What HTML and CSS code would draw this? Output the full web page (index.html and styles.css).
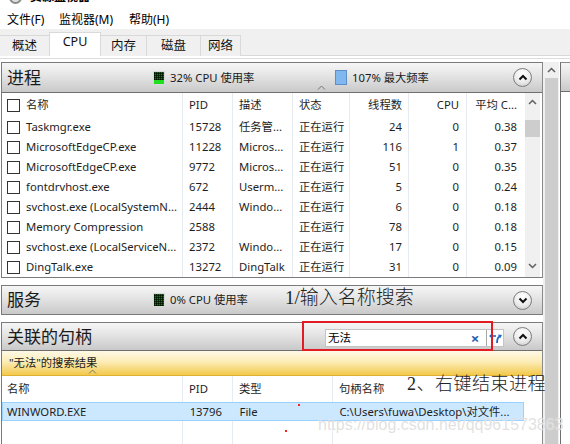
FILE: index.html
```html
<!DOCTYPE html>
<html lang="zh-CN">
<head>
<meta charset="utf-8">
<title>任务管理器</title>
<link rel="stylesheet" href="styles.css">
</head>
<body>
<div class="win">
  <div class="titlebar"><div class="titleinner"><span class="appicon"></span><span class="apptitle">资源监视器</span></div></div>
  <div class="menu"><span class="m1">文件(F)</span><span class="m2">监视器(M)</span><span class="m3">帮助(H)</span></div>
  <div class="tabs">
    <div class="tab w1">概述</div>
    <div class="tab sel w2">CPU</div>
    <div class="tab w3">内存</div>
    <div class="tab w4">磁盘</div>
    <div class="tab w5">网络</div>
  </div>
  <div class="pageline"></div>

  <div class="content">
    <div class="panels">
      <section class="panel proc">
        <header class="phead">
          <span class="ptitle">进程</span>
          <span class="stat s1"><i class="cpuicon p32"></i>32% CPU 使用率</span>
          <span class="stat s2"><i class="freqicon"></i>107% 最大频率</span>
          <span class="circle"><svg width="10" height="7" viewBox="0 0 10 7"><path d="M1.5 5.5 L5 2 L8.5 5.5" fill="none" stroke="#111" stroke-width="2"/></svg></span>
        </header>
        <div class="pbody">
          <div class="grid">
            <div class="row hdr">
              <div class="c name"><i class="cb"></i>名称</div>
              <div class="c pid">PID</div>
              <div class="c desc">描述</div>
              <div class="c st">状态<span class="sortup"><svg width="9" height="5" viewBox="0 0 9 5"><path d="M1 4.5 L4.5 1 L8 4.5" fill="none" stroke="#777" stroke-width="1"/></svg></span></div>
              <div class="c num th">线程数</div>
              <div class="c num cpu">CPU</div>
              <div class="c num avg">平均 C...</div>
            </div>
            <div class="row"><div class="c name"><i class="cb"></i>Taskmgr.exe</div><div class="c pid">15728</div><div class="c desc">任务管...</div><div class="c st">正在运行</div><div class="c num th">24</div><div class="c num cpu">0</div><div class="c num avg">0.38</div></div>
            <div class="row"><div class="c name"><i class="cb"></i>MicrosoftEdgeCP.exe</div><div class="c pid">11228</div><div class="c desc">Micros...</div><div class="c st">正在运行</div><div class="c num th">116</div><div class="c num cpu">1</div><div class="c num avg">0.37</div></div>
            <div class="row"><div class="c name"><i class="cb"></i>MicrosoftEdgeCP.exe</div><div class="c pid">9772</div><div class="c desc">Micros...</div><div class="c st">正在运行</div><div class="c num th">51</div><div class="c num cpu">0</div><div class="c num avg">0.35</div></div>
            <div class="row"><div class="c name"><i class="cb"></i>fontdrvhost.exe</div><div class="c pid">672</div><div class="c desc">Userm...</div><div class="c st">正在运行</div><div class="c num th">5</div><div class="c num cpu">0</div><div class="c num avg">0.24</div></div>
            <div class="row"><div class="c name"><i class="cb"></i>svchost.exe (LocalSystemN...</div><div class="c pid">2444</div><div class="c desc">Windo...</div><div class="c st">正在运行</div><div class="c num th">6</div><div class="c num cpu">0</div><div class="c num avg">0.18</div></div>
            <div class="row"><div class="c name"><i class="cb"></i>Memory Compression</div><div class="c pid">2588</div><div class="c desc"></div><div class="c st">正在运行</div><div class="c num th">78</div><div class="c num cpu">0</div><div class="c num avg">0.18</div></div>
            <div class="row"><div class="c name"><i class="cb"></i>svchost.exe (LocalServiceN...</div><div class="c pid">2372</div><div class="c desc">Windo...</div><div class="c st">正在运行</div><div class="c num th">17</div><div class="c num cpu">0</div><div class="c num avg">0.15</div></div>
            <div class="row"><div class="c name"><i class="cb"></i>DingTalk.exe</div><div class="c pid">13272</div><div class="c desc">DingTalk</div><div class="c st">正在运行</div><div class="c num th">31</div><div class="c num cpu">0</div><div class="c num avg">0.09</div></div>
          </div>
          <div class="iscroll">
            <span class="arr"><svg width="9" height="6" viewBox="0 0 9 6"><path d="M1 5 L4.5 1.5 L8 5" fill="none" stroke="#606060" stroke-width="1.5"/></svg></span>
            <span class="ithumb"></span>
            <span class="arr bottom"><svg width="9" height="6" viewBox="0 0 9 6"><path d="M1 1 L4.5 4.5 L8 1" fill="none" stroke="#606060" stroke-width="1.5"/></svg></span>
          </div>
        </div>
      </section>

      <section class="panel svc">
        <header class="phead">
          <span class="ptitle">服务</span>
          <span class="stat s1"><i class="cpuicon p0"></i>0% CPU 使用率</span>
          <span class="spacer"></span>
          <span class="circle"><svg width="10" height="7" viewBox="0 0 10 7"><path d="M1.5 1.5 L5 5 L8.5 1.5" fill="none" stroke="#111" stroke-width="2"/></svg></span>
        </header>
      </section>

      <section class="panel hnd">
        <header class="phead">
          <span class="ptitle">关联的句柄</span>
          <span class="spacer"></span>
          <span class="search">
            <span class="sval">无法</span>
            <span class="sclear">×</span>
            <span class="sgo"><svg width="15" height="12" viewBox="0 0 15 12"><path d="M1 4 L4 1.5 L4 6.5 Z" fill="#1f66c4"/><path d="M4 4 H8" stroke="#1f66c4" stroke-width="1.6" fill="none"/><path d="M9 11 C9 7 10 5 12 4" stroke="#1f66c4" stroke-width="1.8" fill="none"/><path d="M10 2.5 L14 3 L12 6.5 Z" fill="#1f66c4"/></svg></span>
          </span>
          <span class="circle"><svg width="10" height="7" viewBox="0 0 10 7"><path d="M1.5 5.5 L5 2 L8.5 5.5" fill="none" stroke="#111" stroke-width="2"/></svg></span>
        </header>
        <div class="result">"无法"的搜索结果</div>
        <div class="htable">
          <div class="hrow hhdr">
            <div class="c hname">名称<span class="sortup2"><svg width="9" height="5" viewBox="0 0 9 5"><path d="M1 4.5 L4.5 1 L8 4.5" fill="none" stroke="#777" stroke-width="1"/></svg></span></div>
            <div class="c pid">PID</div>
            <div class="c htype">类型</div>
            <div class="c hpath">句柄名称</div>
          </div>
          <div class="hrow selrow">
            <div class="c hname">WINWORD.EXE</div>
            <div class="c pid">13796</div>
            <div class="c htype">File</div>
            <div class="c hpath">C:\Users\fuwa\Desktop\对文件...</div>
          </div>
          <div class="hrow empty"><div class="c hname"></div><div class="c pid"></div><div class="c htype"></div><div class="c hpath"></div></div>
          <div class="hrow empty"><div class="c hname"></div><div class="c pid"></div><div class="c htype"></div><div class="c hpath"></div></div>
        </div>
      </section>
    </div>

    <div class="oscroll">
      <span class="arr"><svg width="9" height="6" viewBox="0 0 9 6"><path d="M1 5 L4.5 1.5 L8 5" fill="none" stroke="#606060" stroke-width="1.5"/></svg></span>
      <span class="othumb"></span>
    </div>
    <div class="edge"><div class="edgehead"></div></div>
  </div>

  <div class="note n1">1/输入名称搜索</div>
  <div class="note n2">2、右键结束进程</div>
  <div class="redbox"></div>
  <div class="dot d1"></div>
  <div class="dot d2"></div>
  <div class="watermark">https://blog.csdn.net/qq961573863</div>
</div>
</body>
</html>
```

FILE: styles.css
```css
* { box-sizing: border-box; }
html, body { margin: 0; padding: 0; background: #fff; }
body {
  width: 570px; height: 444px; overflow: hidden;
  font-family: "Noto Sans", "Noto Sans CJK SC", sans-serif;
  font-size: 12px; color: #1a1a1a;
}
.win { position: relative; width: 570px; height: 444px; overflow: hidden; }

/* title bar (cropped) */
.titlebar { height: 6px; overflow: hidden; position: relative; }
.titleinner { display: flex; align-items: center; gap: 8px; margin-top: -11px; padding-left: 9px; height: 16px; }
.appicon { width: 13px; height: 13px; border-radius: 50%; border: 2px solid #8a8a8a; background: #e0e0e0; }
.apptitle { font-weight: 700; font-size: 12px; line-height: 16px; color: #000; }

/* menu */
.menu { height: 23px; padding-top: 5px; padding-left: 7px; display: flex; line-height: 18px; font-size: 12px; color: #000; }
.menu .m1 { width: 52px; }
.menu .m2 { width: 70px; }

/* tabs */
.tabs { height: 27px; background: #f0f0f0; border-bottom: 1px solid #d9d9d9; display: flex; align-items: flex-end; }
.tab { height: 21px; margin-bottom: -1px; border: 1px solid #d9d9d9; border-bottom: none; margin-left: -1px; line-height: 19px; font-size: 12.5px; color: #111; background: #f0f0f0; text-align: center; }
.tab.w1 { width: 50px; margin-left: 0; border-left: none; }
.tab.w2 { width: 52px; }
.tab.w3 { width: 47px; }
.tab.w4 { width: 55px; }
.tab.w5 { width: 41px; }
.tab.sel { height: 24px; background: #fff; position: relative; z-index: 1; line-height: 17px; }

.pageline { height: 3px; border-bottom: 1px solid #dcdcdc; }

/* content */
.content { display: flex; height: 382px; margin-top: 3px; }
.panels { width: 543px; padding-left: 1px; display: flex; flex-direction: column; gap: 7px; }
.panel { border: 1px solid #7a7a7a; border-right-color: #8a8a8a; width: 542px; background: #fff; }
.phead {
  height: 30px; border-bottom: 1px solid #6e6e6e;
  background: linear-gradient(#f6f6f6, #e6e6e6 40%, #c9c9c9);
  display: flex; align-items: center; padding-left: 5px; padding-right: 10px;
}
.svc .phead { border-bottom: none; height: 28px; }
.ptitle { font-size: 17px; line-height: 22px; width: 146px; color: #1a1a1a; }
.hnd .ptitle { width: auto; }
.stat { display: flex; align-items: center; font-size: 11.3px; line-height: 16px; }
.stat.s1 { width: 182px; }
.stat.s2 { flex: 1; }
.spacer { flex: 1; }
.cpuicon { width: 12px; height: 14px; margin-right: 5px; border: 1px solid #d8d8d8; display: inline-block;
  background-color: #0f7d0f;
  background-image:
    repeating-linear-gradient(90deg, rgba(0,0,0,.6) 0 1px, transparent 1px 2px),
    repeating-linear-gradient(0deg, rgba(0,0,0,.6) 0 1px, transparent 1px 2px);
}
.cpuicon.p32 { background-image:
    linear-gradient(to top, #1fe01f 0 4px, transparent 4px),
    repeating-linear-gradient(90deg, rgba(0,0,0,.6) 0 1px, transparent 1px 2px),
    repeating-linear-gradient(0deg, rgba(0,0,0,.6) 0 1px, transparent 1px 2px); }
.freqicon { width: 12px; height: 15px; margin-right: 5px; display: inline-block; background: #7fb7ee; border: 1px solid #5d8fc6; }
.circle {
  width: 19px; height: 19px; border-radius: 50%; border: 1px solid #7c7c7c;
  background: radial-gradient(circle at 50% 30%, #ffffff, #ececec 55%, #c4c4c4);
  display: flex; align-items: center; justify-content: center; flex: none;
}

/* process table */
.pbody { display: flex; height: 184px; }
.grid { width: 523px; }
.row { display: flex; height: 20px; line-height: 20px; }
.row.hdr { height: 24px; line-height: 24px; }
.c { white-space: nowrap; overflow: hidden; border-left: 1px solid #e6ebf2; padding: 0 6px; color: #1e1e1e; position: relative; font-size: 11.3px; }
.c.name { width: 180px; border-left: none; padding-left: 5px; display: flex; align-items: center; }
.c.pid { width: 50px; }
.c.desc { width: 60px; }
.c.st { width: 57px; overflow: visible; }
.c.th { width: 59px; }
.c.cpu { width: 58px; padding-right: 7px; }
.c.avg { width: 59px; padding-right: 8px; }
.c.num { text-align: right; }
.cb { width: 13px; height: 13px; border: 1px solid #333; display: inline-block; margin-right: 6px; flex: none; background: #fff; }
.sortup { position: absolute; left: 24px; top: -8px; line-height: 0; }
.iscroll { width: 15px; background: #f0f0f0; display: flex; flex-direction: column; align-items: center; }
.iscroll .arr { height: 17px; display: flex; align-items: center; justify-content: center; line-height: 0; }
.iscroll .ithumb { width: 15px; height: 17px; background: #cdcdcd; margin-top: 10px; }
.iscroll .arr.bottom { margin-top: auto; margin-bottom: 3px; }

/* handles */
.hnd .phead { height: 28px; }
.search {
  display: flex; align-items: center; height: 18px; width: 179px;
  border: 1px solid #c4c4c4; background: #fff; margin-right: 9px; margin-top: 2px;
}
.sval { flex: 1; padding-left: 2px; font-size: 11.5px; line-height: 16px; color: #000; }
.sclear { width: 12px; color: #2a5fb0; font-size: 15px; line-height: 16px; font-weight: 700; text-align: center; margin-right: 5px; }
.sgo { width: 17px; height: 16px; border-left: 1px solid #a8a8a8; display: flex; align-items: center; justify-content: center; }
.result {
  height: 25px; line-height: 24px; padding-left: 7px; font-size: 11.3px; color: #1a1a1a;
  background: linear-gradient(#fff9e6, #fcecb6 45%, #f3c94c);
  border-bottom: 1px solid #e0b030;
}
.hrow { display: flex; height: 20px; line-height: 18px; }
.hhdr { height: 26px; line-height: 26px; }
.c.hname { width: 180px; border-left: none; padding-left: 5px; overflow: visible; }
.c.htype { width: 100px; }
.c.hpath { width: 191px; }
.sortup2 { position: absolute; left: 86px; top: -7px; line-height: 0; }
.selrow { height: 19px; background: #cce8ff; border: 1px solid #99d1ff; width: 522px; }
.selrow .c { border-left-color: #cce8ff; line-height: 17px; }
.selrow .c.hname { padding-left: 4px; }
.empty { height: 22px; }

/* outer scrollbar & edge */
.oscroll { width: 17px; background: #f0f0f0; display: flex; flex-direction: column; align-items: center; }
.oscroll .arr { height: 16px; display: flex; align-items: center; justify-content: center; line-height: 0; }
.oscroll .othumb { width: 13px; flex: 1; background: #cdcdcd; margin-left: 1px; }
.edge { width: 10px; margin-left: 1px; border-left: 1px solid #6e6e6e; border-top: 1px solid #8a8a8a; }
.edgehead { height: 29px; background: linear-gradient(#f6f6f6, #e6e6e6 40%, #c9c9c9); border-bottom: 1px solid #6e6e6e; }

/* annotations over the screenshot */
.note { position: absolute; font-family: "Liberation Serif", "Noto Sans CJK SC", serif; font-weight: 300; font-size: 18px; line-height: 22px; color: #222; }
.n1 { left: 285px; top: 287px; font-size: 19px; }
.n2 { left: 407px; top: 373px; letter-spacing: 0.5px; }
.redbox { position: absolute; left: 302px; top: 321px; width: 191px; height: 30px; border: 2px solid #e21c24; }
.dot { position: absolute; width: 2px; height: 2px; background: #ff2020; }
.d1 { left: 298px; top: 404px; }
.d2 { left: 285px; top: 430px; }
.watermark {
  position: absolute; left: 318px; top: 415px; font-family: "Liberation Sans", sans-serif; font-size: 16px; line-height: 20px;
  color: rgba(200,200,200,0.55); text-shadow: 0 0 1px rgba(255,255,255,0.9);
}
```
